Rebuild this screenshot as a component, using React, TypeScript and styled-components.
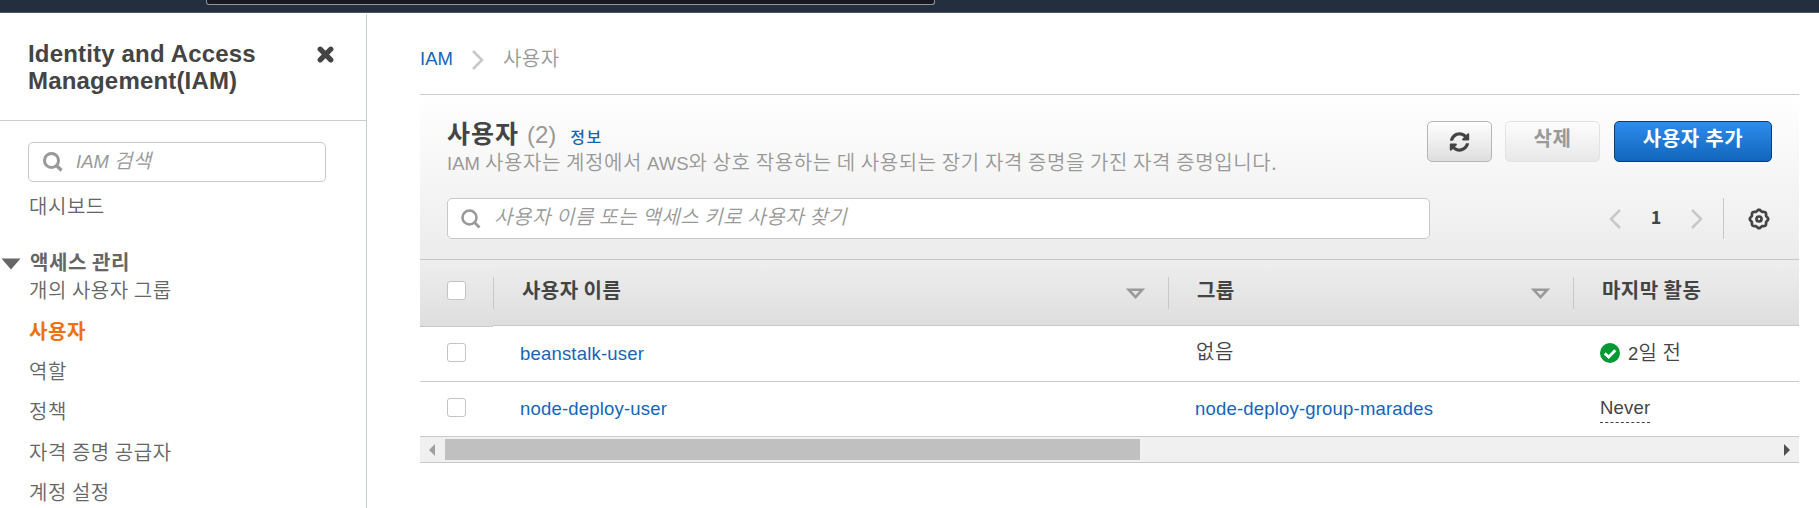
import React from "react";
import styled, { createGlobalStyle, css } from "styled-components";

const GlobalStyle = createGlobalStyle`
  *, *::before, *::after { box-sizing: border-box; }
  body {
    margin: 0;
    background: #fff;
    color: #444;
    font-family: "Liberation Sans", "Noto Sans CJK KR", sans-serif;
    font-size: 18.5px;
    font-weight: 350;
    overflow: hidden;
  }
  a { color: inherit; text-decoration: none; }
`;

const Ko = styled.span<{ $size?: number; $gap?: number }>`
  font-family: "Noto Sans CJK KR", sans-serif;
  font-size: ${(p) => p.$size ?? 20}px;
  letter-spacing: ${(p) => p.$gap ?? 0.55}px;
`;

const TopBar = styled.header`
  height: 13px;
  background: #232f3e;
  border-bottom: 1px solid #4b5563;
  padding-left: 206px;
`;

const TopSearch = styled.div`
  width: 729px;
  height: 5px;
  background: #16191f;
  border: 1px solid #8d9999;
  border-top: 0;
  border-radius: 0 0 3px 3px;
`;

const Page = styled.div`
  display: flex;
  height: 495px;
`;

const Sidebar = styled.aside`
  width: 367px;
  margin-top: 1px;
  border-right: 1px solid #c8cfd2;
  flex: none;
`;

const SidebarHead = styled.div`
  display: flex;
  justify-content: space-between;
  height: 107px;
  padding: 26px 32px 0 28px;
  border-bottom: 1px solid #ccc;
`;

const ServiceName = styled.h2`
  margin: 0;
  font-size: 24px;
  line-height: 27px;
  letter-spacing: 0.17px;
  font-weight: 700;
  white-space: nowrap;
`;

const CloseIcon = styled.svg`
  margin: 6px 0 0;
  width: 17px;
  height: 17px;
`;

const SearchBox = styled.label<{ $width: number; $indent: number; $height: number }>`
  display: flex;
  align-items: center;
  width: ${(p) => p.$width}px;
  height: ${(p) => p.$height}px;
  padding-left: ${(p) => p.$indent}px;
  gap: 13px;
  background: #fff;
  border: 1px solid #c8c8c8;
  border-radius: 5px;
  color: #999;
  font-style: italic;
  white-space: nowrap;
`;

const Placeholder = styled.span`
  line-height: 30px;
  margin-top: -3px;
`;

const SidebarBody = styled.div`
  padding: 21px 0 0 28px;
`;

const NavItem = styled.a<{ $active?: boolean; $top: number }>`
  display: block;
  height: 28px;
  margin-top: ${(p) => p.$top}px;
  padding-left: 1px;
  line-height: 28px;
  color: ${(p) => (p.$active ? "#ec7211" : "#666")};
  font-weight: ${(p) => (p.$active ? 700 : 350)};
`;

const NavGroup = styled.div`
  display: flex;
  align-items: center;
  gap: 9px;
  height: 28px;
  margin: 28px 0 0 -27px;
  line-height: 28px;
  color: #666;
  font-weight: 700;
`;

const GroupArrow = styled.svg`
  margin-top: 4px;
`;

const Main = styled.main`
  width: 1379px;
  margin-left: 53px;
`;

const Breadcrumb = styled.nav`
  display: flex;
  align-items: center;
  height: 81px;
  padding-top: 11px;
  color: #999;
`;

const Crumb = styled.span`
  margin-top: -3px;
`;

const Link = styled.a`
  color: #1166bb;
`;

const CrumbArrow = styled.svg`
  margin: 2px 19px 0 19px;
`;

const CardHead = styled.section`
  height: 165px;
  border-top: 1px solid #ccc;
  background: linear-gradient(#fff, #ececec);
  padding: 26px 27px 0 27px;
`;

const TitleRow = styled.div`
  display: flex;
  justify-content: space-between;
  height: 77px;
`;

const Title = styled.h1`
  display: flex;
  align-items: baseline;
  margin: -4px 0 0;
  height: 31px;
  line-height: 31px;
  font-size: 25px;
`;

const Count = styled.span`
  margin-left: 8px;
  font-size: 24px;
  font-weight: 400;
  color: #999;
`;

const Info = styled(Link)`
  margin-left: 14px;
  font-weight: 500;
`;

const Description = styled.p`
  margin: 0;
  line-height: 28px;
  color: #999;
  white-space: nowrap;
`;

const Actions = styled.div`
  display: flex;
  height: 41px;
`;

const Button = styled.button<{ $kind: "normal" | "disabled" | "primary"; $width: number; $left?: number }>`
  display: flex;
  align-items: center;
  justify-content: center;
  width: ${(p) => p.$width}px;
  height: 41px;
  margin: 0 0 0 ${(p) => p.$left ?? 0}px;
  padding: 0 0 7px;
  border-radius: 5px;
  font-weight: 700;
  line-height: 28px;
  ${(p) =>
    p.$kind === "primary"
      ? css`
          color: #fff;
          border: 1px solid #0b3e70;
          background: linear-gradient(#2e8cee, #1166bb);
        `
      : p.$kind === "disabled"
      ? css`
          color: #999;
          border: 1px solid #e2e2e2;
          background: linear-gradient(#fdfdfd, #e8e8e8);
        `
      : css`
          color: #444;
          border: 1px solid #b5b5b5;
          padding: 0;
          background: linear-gradient(#fff, #dedede);
        `}
`;

const FilterRow = styled.div`
  display: flex;
  align-items: center;
  height: 41px;
`;

const Pager = styled.div`
  display: flex;
  align-items: center;
  height: 41px;
  margin-left: auto;
  padding-right: 20px;
  border-right: 1px solid #c8c8c8;
`;

const PageNumber = styled.span`
  width: 70px;
  text-align: center;
  font: 700 18px "Noto Sans CJK KR", sans-serif;
  line-height: 24px;
  margin-top: -5px;
`;

const Gear = styled.svg`
  margin: 0 2px 0 24px;
`;

const columns = css`
  display: grid;
  grid-template-columns: 73px 675px 405px 226px;
`;

const TableHead = styled.div`
  ${columns}
  height: 67px;
`;

const HeadCell = styled.div<{ $check?: boolean }>`
  display: flex;
  align-items: center;
  height: ${(p) => (p.$check ? 68 : 67)}px;
  padding-left: ${(p) => (p.$check ? 27 : 0)}px;
  padding-bottom: ${(p) => (p.$check ? 5 : 0)}px;
  border: solid #c8c8c8;
  border-width: 1px 0;
  background: linear-gradient(#eee, #dedede);
`;

const HeadLabel = styled.div`
  display: flex;
  align-items: center;
  justify-content: space-between;
  width: 100%;
  height: 32px;
  padding: 0 23px 5px 28px;
  border-left: 1px solid #c8c8c8;
  font-weight: 700;
  line-height: 28px;
`;

const SortIcon = styled.svg`
  margin-top: 7px;
`;

const Row = styled.div`
  ${columns}
  height: 55px;
  border-bottom: 1px solid #ccc;
  line-height: 28px;
`;

const FirstRow = styled(Row)`
  height: 56px;
`;

const CheckCell = styled.div<{ $top: number }>`
  padding: ${(p) => p.$top}px 0 0 27px;
`;

const Checkbox = styled.span`
  display: block;
  width: 19px;
  height: 19px;
  background: #fff;
  border: 1px solid #c4c4c4;
  border-radius: 3px;
`;

const Cell = styled.div<{ $top: number; $left?: number }>`
  display: flex;
  align-items: flex-start;
  padding: ${(p) => p.$top}px 0 0 ${(p) => p.$left ?? 27}px;
  letter-spacing: 0.19px;
`;

const StatusIcon = styled.svg`
  margin: 5px 8px 0 0;
`;

const Never = styled.span`
  height: 29px;
  border-bottom: 1px dashed #444;
`;

const Scrollbar = styled.div`
  display: flex;
  align-items: center;
  height: 26px;
  background: #f0f0f0;
  border-bottom: 1px solid #c8c8c8;
`;

const Thumb = styled.div`
  width: 695px;
  height: 21px;
  margin: 0 auto 0 10px;
  background: #c0c0c0;
`;

const SearchIcon = ({ thick = 3 }: { thick?: number }) => (
  <svg width="20" height="20" viewBox="0 0 20 20" fill="none" stroke="#999" strokeWidth={thick}>
    <circle cx="8.5" cy="8.5" r="7" />
    <path d="M13.5 13.5L18.5 18.5" strokeWidth={thick + 0.3} />
  </svg>
);

const Chevron = ({ left }: { left?: boolean }) => (
  <svg width="12" height="20" viewBox="0 0 12 20" fill="none" stroke="#c8c8c8" strokeWidth="2.5">
    <path d={left ? "M11 1L2 10L11 19" : "M1 1L10 10L1 19"} />
  </svg>
);

const Sort = () => (
  <SortIcon width="19" height="12" viewBox="0 0 19 12" fill="none" stroke="#999" strokeWidth="2.6">
    <path d="M2.6 1.7H16.4L9.5 9.2Z" />
  </SortIcon>
);

const gearPath = (() => {
  const points: string[] = [];
  for (let i = 0; i <= 96; i++) {
    const a = (i / 96) * Math.PI * 2;
    const r = 8.5 + 0.7 * Math.cos(a * 8);
    points.push(`${(11 + r * Math.cos(a)).toFixed(2)} ${(11 + r * Math.sin(a)).toFixed(2)}`);
  }
  return `M${points.join("L")}Z`;
})();

const navItems = [
  { label: "개의 사용자 그룹", top: 0 },
  { label: "사용자", top: 13, active: true },
  { label: "역할", top: 12 },
  { label: "정책", top: 12 },
  { label: "자격 증명 공급자", top: 13 },
  { label: "계정 설정", top: 12 },
];

export default function App() {
  return (
    <>
      <GlobalStyle />
      <TopBar>
        <TopSearch />
      </TopBar>
      <Page>
        <Sidebar>
          <SidebarHead>
            <ServiceName>
              Identity and Access
              <br />
              Management(IAM)
            </ServiceName>
            <CloseIcon viewBox="0 0 17 17" stroke="#444" strokeWidth="5.2" strokeLinecap="round">
              <path d="M3.2 3.2L13.8 13.8M13.8 3.2L3.2 13.8" />
            </CloseIcon>
          </SidebarHead>
          <SidebarBody>
            <SearchBox $width={298} $height={40} $indent={14}>
              <SearchIcon />
              <Placeholder>
                IAM<Ko> 검색</Ko>
              </Placeholder>
            </SearchBox>
            <NavItem $top={10}>
              <Ko>대시보드</Ko>
            </NavItem>
            <NavGroup>
              <GroupArrow width="20" height="12" viewBox="0 0 20 12">
                <path d="M0.5 0.5H19.5L10 11.5Z" fill="#666" />
              </GroupArrow>
              <Ko>액세스 관리</Ko>
            </NavGroup>
            {navItems.map((item) => (
              <NavItem key={item.label} $top={item.top} $active={item.active}>
                <Ko>{item.label}</Ko>
              </NavItem>
            ))}
          </SidebarBody>
        </Sidebar>
        <Main>
          <Breadcrumb>
            <Link>IAM</Link>
            <CrumbArrow width="12" height="20" viewBox="0 0 12 20" fill="none" stroke="#c8c8c8" strokeWidth="2.5">
              <path d="M1 1L10 10L1 19" />
            </CrumbArrow>
            <Crumb>
              <Ko>사용자</Ko>
            </Crumb>
          </Breadcrumb>
          <CardHead>
            <TitleRow>
              <div>
                <Title>
                  <Ko $size={25} $gap={1}>사용자</Ko>
                  <Count>(2)</Count>
                  <Info>
                    <Ko $size={16} $gap={1.5}>정보</Ko>
                  </Info>
                </Title>
                <Description>
                  IAM<Ko $gap={0.6}> 사용자는 계정에서 </Ko>AWS<Ko $gap={0.6}>와 상호 작용하는 데 사용되는 장기 자격 증명을 가진 자격 증명입니다.</Ko>
                </Description>
              </div>
              <Actions>
                <Button $kind="normal" $width={65}>
                  <svg width="21" height="20" viewBox="0 0 512 512" fill="#444">
                    <path d="M370.7 133.3C339.5 104 298.9 88 255.8 88c-77.5.1-144.3 53.2-162.8 126.9-1.3 5.4-6.1 9.2-11.7 9.2H24.1c-7.5 0-13.2-6.8-11.8-14.2C33.9 94.9 134.8 8 256 8c66.4 0 126.8 26.1 171.3 68.7L463 41C478.1 25.9 504 36.6 504 57.9V192c0 13.3-10.7 24-24 24H345.9c-21.4 0-32.1-25.9-17-41l41.8-41.7zM32 296h134.1c21.4 0 32.1 25.9 17 41l-41.8 41.8c31.3 29.3 71.8 45.3 114.9 45.3 77.4-.1 144.3-53.1 162.8-126.8 1.3-5.4 6.1-9.2 11.7-9.2h57.3c7.5 0 13.2 6.8 11.8 14.2C478.1 417.1 377.2 504 256 504c-66.4 0-126.8-26.1-171.3-68.7L49 471C33.9 486.1 8 475.4 8 454.1V320c0-13.3 10.7-24 24-24z" />
                  </svg>
                </Button>
                <Button $kind="disabled" $width={95} $left={13}>
                  <Ko>삭제</Ko>
                </Button>
                <Button $kind="primary" $width={158} $left={14}>
                  <Ko $gap={0.7}>사용자 추가</Ko>
                </Button>
              </Actions>
            </TitleRow>
            <FilterRow>
              <SearchBox $width={983} $height={41} $indent={13}>
                <SearchIcon thick={2.6} />
                <Placeholder>
                  <Ko $gap={0.6}>사용자 이름 또는 액세스 키로 사용자 찾기</Ko>
                </Placeholder>
              </SearchBox>
              <Pager>
                <Chevron left />
                <PageNumber>1</PageNumber>
                <Chevron />
              </Pager>
              <Gear width="22" height="22" viewBox="0 0 22 22" fill="none" stroke="#444" strokeWidth="2.7">
                <path d={gearPath} />
                <circle cx="11" cy="11" r="2.5" />
              </Gear>
            </FilterRow>
          </CardHead>
          <TableHead>
            <HeadCell $check>
              <Checkbox />
            </HeadCell>
            {["사용자 이름", "그룹", "마지막 활동"].map((label, i) => (
              <HeadCell key={label}>
                <HeadLabel>
                  <Ko $gap={0.45}>{label}</Ko>
                  {i < 2 && <Sort />}
                </HeadLabel>
              </HeadCell>
            ))}
          </TableHead>
          <FirstRow>
            <CheckCell $top={17}>
              <Checkbox />
            </CheckCell>
            <Cell $top={14}>
              <Link>beanstalk-user</Link>
            </Cell>
            <Cell $top={11} $left={28}>
              <Ko>없음</Ko>
            </Cell>
            <Cell $top={12}>
              <StatusIcon width="20" height="20" viewBox="0 0 20 20" fill="none">
                <circle cx="10" cy="10" r="10" fill="#093" />
                <path d="M4.7 10.3L8.7 14L15.3 7.3" stroke="#fff" strokeWidth="3" />
              </StatusIcon>
              <span>
                2<Ko>일 전</Ko>
              </span>
            </Cell>
          </FirstRow>
          <Row>
            <CheckCell $top={16}>
              <Checkbox />
            </CheckCell>
            <Cell $top={13}>
              <Link>node-deploy-user</Link>
            </Cell>
            <Cell $top={13}>
              <Link>node-deploy-group-marades</Link>
            </Cell>
            <Cell $top={12}>
              <Never>Never</Never>
            </Cell>
          </Row>
          <Scrollbar>
            <svg width="15" height="12" viewBox="0 0 15 12">
              <path d="M15 0V12L9 6Z" fill="#a0a0a0" />
            </svg>
            <Thumb />
            <svg width="15" height="12" viewBox="0 0 15 12">
              <path d="M0 0V12L6 6Z" fill="#505050" />
            </svg>
          </Scrollbar>
        </Main>
      </Page>
    </>
  );
}
